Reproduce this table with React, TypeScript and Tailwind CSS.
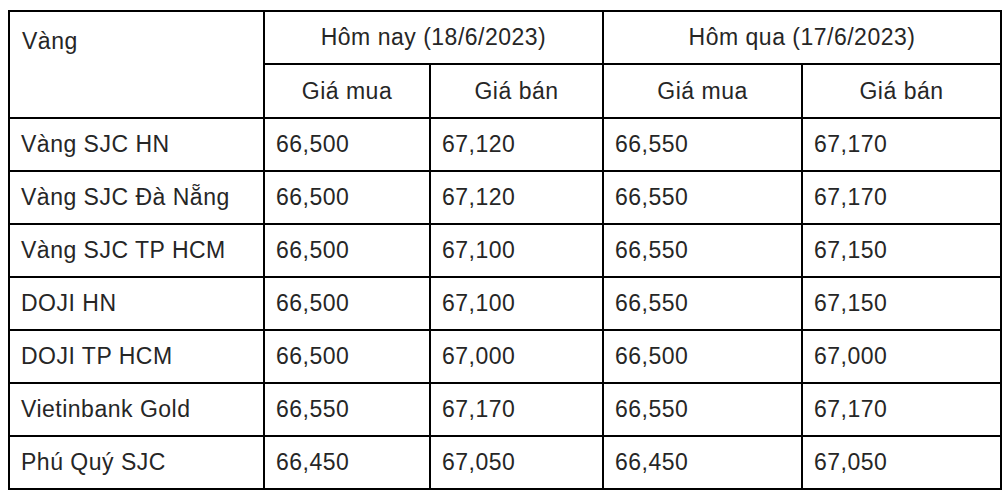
const rows = [
  ['Vàng SJC HN', '66,500', '67,120', '66,550', '67,170'],
  ['Vàng SJC Đà Nẵng', '66,500', '67,120', '66,550', '67,170'],
  ['Vàng SJC TP HCM', '66,500', '67,100', '66,550', '67,150'],
  ['DOJI HN', '66,500', '67,100', '66,550', '67,150'],
  ['DOJI TP HCM', '66,500', '67,000', '66,500', '67,000'],
  ['Vietinbank Gold', '66,550', '67,170', '66,550', '67,170'],
  ['Phú Quý SJC', '66,450', '67,050', '66,450', '67,050'],
];

export default function App() {
  return (
    <div className="min-h-screen bg-white pt-[10px] pl-[8px] font-['Liberation_Sans',Arial,sans-serif] text-[23px] tracking-[0.5px] text-[#262626]">
      <table className="border-collapse border-2 border-black w-[992px] table-fixed">
        <colgroup>
          <col className="w-[255px]" />
          <col className="w-[166px]" />
          <col className="w-[173px]" />
          <col className="w-[199px]" />
          <col className="w-[199px]" />
        </colgroup>
        <thead>
          <tr className="h-[53px]">
            <th rowSpan={2} className="border-2 border-black align-top text-left font-normal px-[12px] pt-[12px]">
              Vàng
            </th>
            <th colSpan={2} className="border-2 border-black font-normal text-center">
              Hôm nay (18/6/2023)
            </th>
            <th colSpan={2} className="border-2 border-black font-normal text-center">
              Hôm qua (17/6/2023)
            </th>
          </tr>
          <tr className="h-[54px]">
            <th className="border-2 border-black font-normal text-center">Giá mua</th>
            <th className="border-2 border-black font-normal text-center">Giá bán</th>
            <th className="border-2 border-black font-normal text-center">Giá mua</th>
            <th className="border-2 border-black font-normal text-center">Giá bán</th>
          </tr>
        </thead>
        <tbody>
          {rows.map((r) => (
            <tr key={r[0]} className="h-[53px]">
              {r.map((c, i) => (
                <td key={i} className="border-2 border-black px-[11px] text-left">
                  {c}
                </td>
              ))}
            </tr>
          ))}
        </tbody>
      </table>
    </div>
  );
}
